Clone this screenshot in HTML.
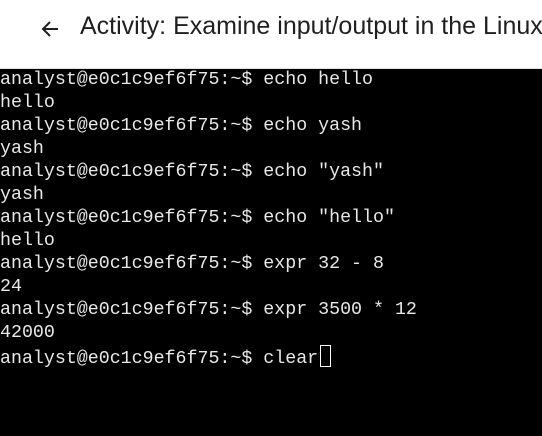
<!DOCTYPE html>
<html><head><style>
body{margin:0;width:542px;height:436px;overflow:hidden;background:#fff;position:relative}
.hdr{position:absolute;left:0;top:0;width:542px;height:69px;background:#fff;border-bottom:1px solid #e0e0e0;box-sizing:border-box;overflow:hidden}
.t{position:absolute;left:80px;top:12px;font:25px "Liberation Sans",sans-serif;color:#1f1f1f;white-space:nowrap}
svg{position:absolute;left:38px;top:17px}
.term{position:absolute;left:0;top:69px;width:542px;height:367px;background:#000;color:#e8e8e8;font:18.3px/23px "Liberation Mono",monospace;white-space:pre;padding-top:0}
.cur{display:inline-block;width:9px;height:20px;border:1px solid #fff;vertical-align:-4px;margin-left:2px}
</style></head><body>
<div class="hdr"><svg width="24" height="24" viewBox="0 0 24 24"><path d="M20 12H5M12 5l-7 7 7 7" stroke="#1f1f1f" stroke-width="2" fill="none"/></svg><div class="t">Activity: Examine input/output in the Linux</div></div>
<div class="term">analyst@e0c1c9ef6f75:~$ echo hello
hello
analyst@e0c1c9ef6f75:~$ echo yash
yash
analyst@e0c1c9ef6f75:~$ echo "yash"
yash
analyst@e0c1c9ef6f75:~$ echo "hello"
hello
analyst@e0c1c9ef6f75:~$ expr 32 - 8
24
analyst@e0c1c9ef6f75:~$ expr 3500 * 12
42000
analyst@e0c1c9ef6f75:~$ clear<span class="cur"></span></div>
</body></html>
